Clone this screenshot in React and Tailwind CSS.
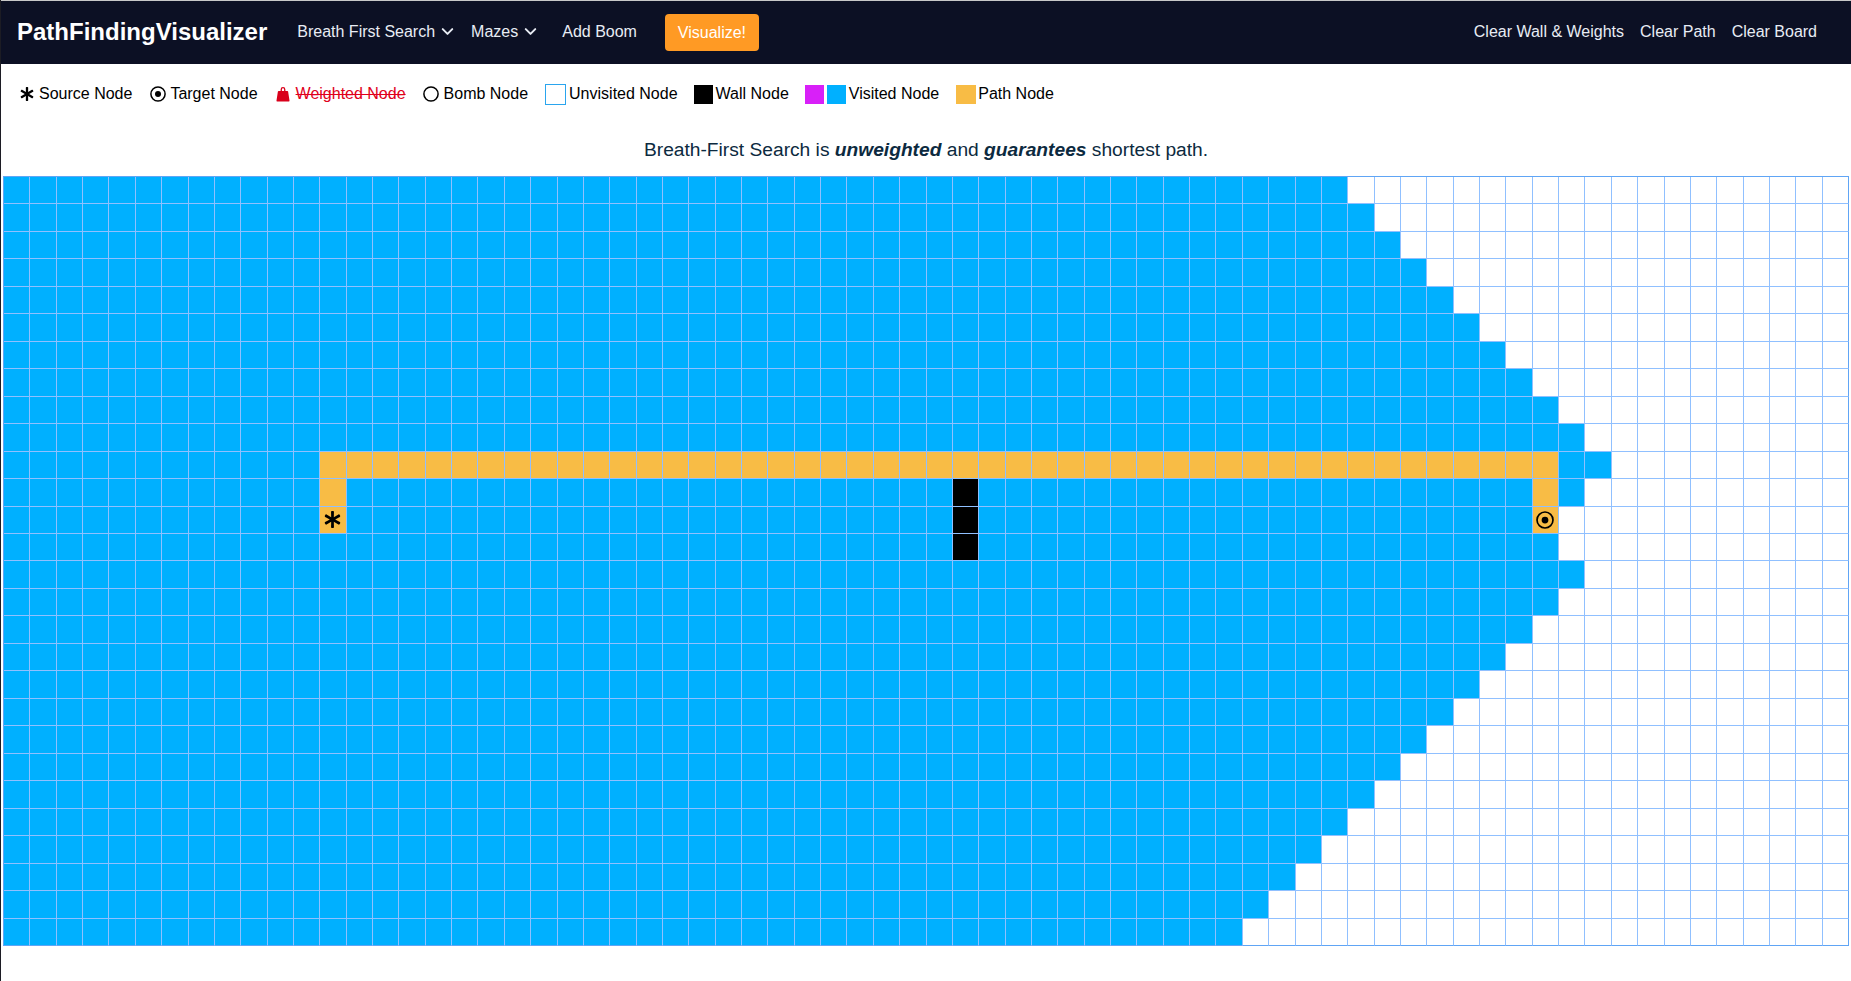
import React from "react";
import { FaAsterisk } from "react-icons/fa";
import { ChevronDown } from "lucide-react";

const ROWS = 28;
const COLS = 70;

// how many cells the search reached in each row
const VISITED = [
  51, 52, 53, 54, 55, 56, 57, 58, 59, 60, 61, 60, 59, 59,
  60, 59, 58, 57, 56, 55, 54, 53, 52, 51, 50, 49, 48, 47,
];

const isWall = (r, c) => c === 36 && r >= 11 && r <= 13;

const isPath = (r, c) =>
  (r === 10 && c >= 12 && c <= 58) ||
  (r === 11 && (c === 12 || c === 58)) ||
  (r === 12 && (c === 12 || c === 58));

function Ring({ size, dot }) {
  return (
    <svg width={size} height={size} viewBox="0 0 16 16" className="shrink-0">
      <circle cx="8" cy="8" r="7.1" fill="none" stroke="black" strokeWidth="1.5" />
      {dot && <circle cx="8" cy="8" r="3" fill="black" />}
    </svg>
  );
}

function WeightIcon() {
  return (
    <svg width="14" height="16" viewBox="0 0 14 16" className="shrink-0">
      <path
        d="M4.6 5V3.4a2.4 2.4 0 0 1 4.8 0V5H8.1V3.4a1.1 1.1 0 0 0-2.2 0V5Z"
        fill="#d9001b"
      />
      <path d="M2.6 5h8.8c.4 0 .6.2.7.5l1.4 9c.1.6-.3 1-.8 1H1.3c-.5 0-.9-.4-.8-1l1.4-9c.1-.3.3-.5.7-.5Z" fill="#d9001b" />
    </svg>
  );
}

function Cell({ r, c }) {
  let color = "bg-white";
  if (c < VISITED[r]) color = "bg-[#00b0ff]";
  if (isPath(r, c)) color = "bg-[#f8bc45]";
  if (isWall(r, c)) color = "bg-black";

  const right = c === COLS - 1 ? "border-r-[#60a5f5]" : "border-r-[#90c0ff]";
  const bottom = r === ROWS - 1 ? "border-b-[#60a5f5]" : "border-b-[#90c0ff]";

  return (
    <div className={`${color} ${right} ${bottom} flex items-center justify-center border-r border-b`}>
      {r === 12 && c === 12 && <FaAsterisk className="text-black text-[17px]" />}
      {r === 12 && c === 58 && <Ring size={18} dot />}
    </div>
  );
}

function NavLink({ children, dropdown }) {
  return (
    <a className="flex items-center gap-[3px] pb-[2px] text-[#e8ecf4] text-base cursor-pointer">
      {children}
      {dropdown && <ChevronDown size={19} strokeWidth={2.5} />}
    </a>
  );
}

function Legend({ icon, label, gap, className = "" }) {
  return (
    <div className={`flex items-center ${gap}`}>
      {icon}
      <span className={className}>{label}</span>
    </div>
  );
}

export default function App() {
  const cells = [];
  for (let r = 0; r < ROWS; r++) {
    for (let c = 0; c < COLS; c++) {
      cells.push(<Cell key={r + "-" + c} r={r} c={c} />);
    }
  }

  return (
    <div className="min-h-[981px] bg-white border-l border-[#1c1c24] font-['Liberation_Sans',sans-serif] text-black">
      {/* Navbar */}
      <nav className="h-[64px] bg-[#0c1024] border-t border-[#c8c8c8] flex items-center pl-4 pr-[34px]">
        <span className="text-white text-2xl font-bold mr-[30px] pb-[2px]">PathFindingVisualizer</span>
        <div className="flex items-center gap-[14px]">
          <NavLink dropdown>Breath First Search</NavLink>
          <NavLink dropdown>Mazes</NavLink>
          <span className="ml-2"><NavLink>Add Boom</NavLink></span>
          <button className="ml-[14px] h-[37px] w-[94px] rounded bg-[#ff9a24] text-white text-base">Visualize!</button>
        </div>
        <div className="ml-auto flex items-center gap-4">
          <NavLink>Clear Wall &amp; Weights</NavLink>
          <NavLink>Clear Path</NavLink>
          <NavLink>Clear Board</NavLink>
        </div>
      </nav>

      {/* Legend */}
      <div className="h-[60px] flex items-center gap-[17px] pl-[19px] text-base">
        <Legend gap="gap-[5px]" icon={<FaAsterisk className="text-[14px]" />} label="Source Node" />
        <div className="ml-px">
          <Legend gap="gap-[4px]" icon={<Ring size={16} dot />} label="Target Node" />
        </div>
        <div className="ml-px">
          <Legend
            gap="gap-[6px]"
            icon={<WeightIcon />}
            label="Weighted Node"
            className="text-[#e0001b] line-through"
          />
        </div>
        <Legend gap="gap-[5px]" icon={<Ring size={16} />} label="Bomb Node" />
        <Legend gap="gap-[3px]" icon={<div className="w-[21px] h-[21px] border border-[#2aa5ee]" />} label="Unvisited Node" />
        <div className="-ml-px">
          <Legend gap="gap-[3px]" icon={<div className="w-[19px] h-[19px] bg-black" />} label="Wall Node" />
        </div>
        <div className="-ml-px flex items-center gap-[3px]">
          <div className="w-[19px] h-[19px] bg-[#d820f8]" />
          <Legend gap="gap-[3px]" icon={<div className="w-[19px] h-[19px] bg-[#00b0ff]" />} label="Visited Node" />
        </div>
        <Legend gap="gap-[2px]" icon={<div className="w-[20px] h-[19px] bg-[#f8bc45]" />} label="Path Node" />
      </div>

      {/* Algorithm description */}
      <p className="text-center text-[#0c2a40] text-[19.2px] leading-[26px] mb-[13px] mt-[13px]">
        Breath-First Search is <b className="italic">unweighted</b> and <b className="italic">guarantees</b> shortest path.
      </p>

      {/* Grid */}
      <div className="ml-[2px] w-[1846px] h-[770px] grid grid-cols-[repeat(70,1fr)] grid-rows-[repeat(28,1fr)] border-t border-l border-[#60a5f5]">
        {cells}
      </div>
    </div>
  );
}
